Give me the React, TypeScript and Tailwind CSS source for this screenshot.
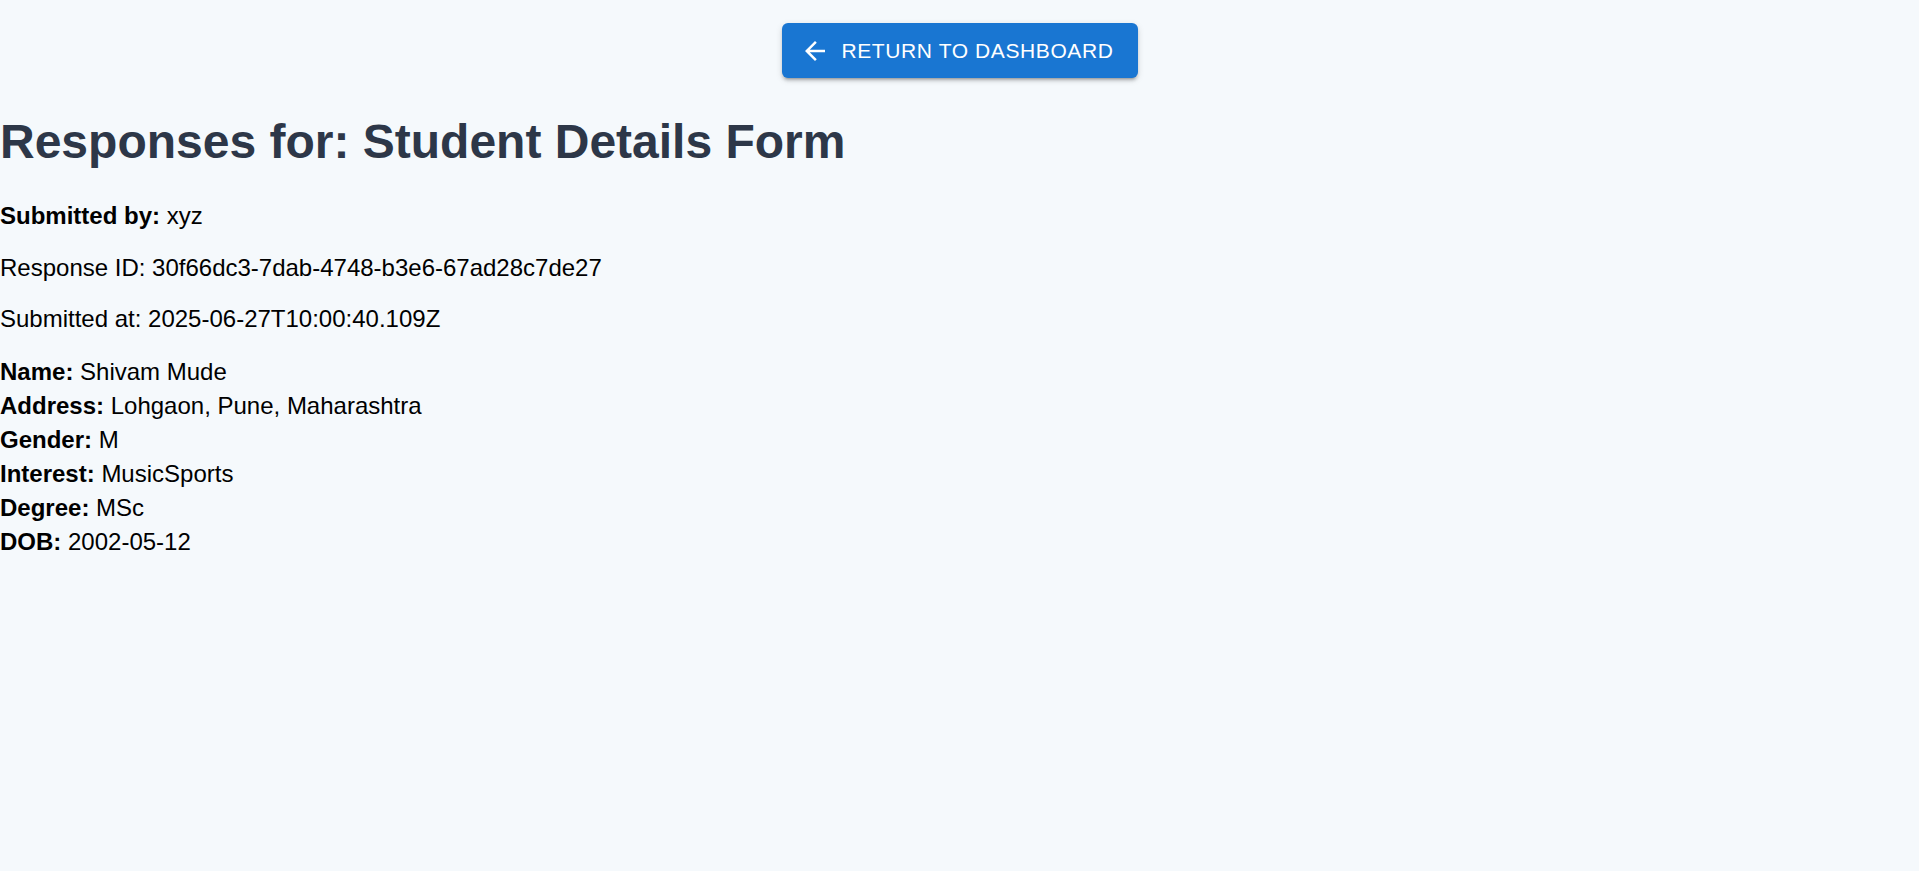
import React from 'react';

const fields: { label: string; value: string }[] = [
  { label: 'Name', value: 'Shivam Mude' },
  { label: 'Address', value: 'Lohgaon, Pune, Maharashtra' },
  { label: 'Gender', value: 'M' },
  { label: 'Interest', value: 'MusicSports' },
  { label: 'Degree', value: 'MSc' },
  { label: 'DOB', value: '2002-05-12' },
];

const ArrowBackIcon: React.FC = () => (
  <svg className="w-[30px] h-[30px]" viewBox="0 0 24 24" fill="currentColor">
    <path d="M20 11H7.83l5.59-5.59L12 4l-8 8 8 8 1.41-1.41L7.83 13H20v-2z" />
  </svg>
);

const App: React.FC = () => {
  return (
    <div className="min-h-screen bg-[#f5f9fc] font-['Liberation_Sans',Arial,sans-serif] text-black">
      {/* Back button */}
      <div className="flex justify-center pt-[23px]">
        <button className="flex items-center h-[55px] pl-[24px] pr-[24px] rounded-[6px] bg-[#1976d2] text-white text-[21px] uppercase tracking-[0.6px] shadow-[0_4px_2px_-3px_rgba(0,0,0,0.2),0_3px_3px_0_rgba(0,0,0,0.14),0_2px_7px_0_rgba(0,0,0,0.12)]">
          <span className="-ml-[6px] mr-[12px] flex">
            <ArrowBackIcon />
          </span>
          Return to Dashboard
        </button>
      </div>

      {/* Header */}
      <h1 className="mt-[36px] mb-[33px] text-[48px] leading-[55px] font-bold text-[#2d3748]">
        Responses for: Student Details Form
      </h1>

      {/* Response meta */}
      <p className="text-[24px] leading-[27.6px] mb-[24px]">
        <strong>Submitted by:</strong> xyz
      </p>
      <p className="text-[24px] leading-[27.6px] mb-[24px]">
        Response ID: 30f66dc3-7dab-4748-b3e6-67ad28c7de27
      </p>
      <p className="text-[24px] leading-[27.6px] mb-[22px]">
        Submitted at: 2025-06-27T10:00:40.109Z
      </p>

      {/* Answers */}
      <div className="text-[24px] leading-[34px]">
        {fields.map((f) => (
          <div key={f.label}>
            <strong>{f.label}:</strong> {f.value}
          </div>
        ))}
      </div>
    </div>
  );
};

export default App;
